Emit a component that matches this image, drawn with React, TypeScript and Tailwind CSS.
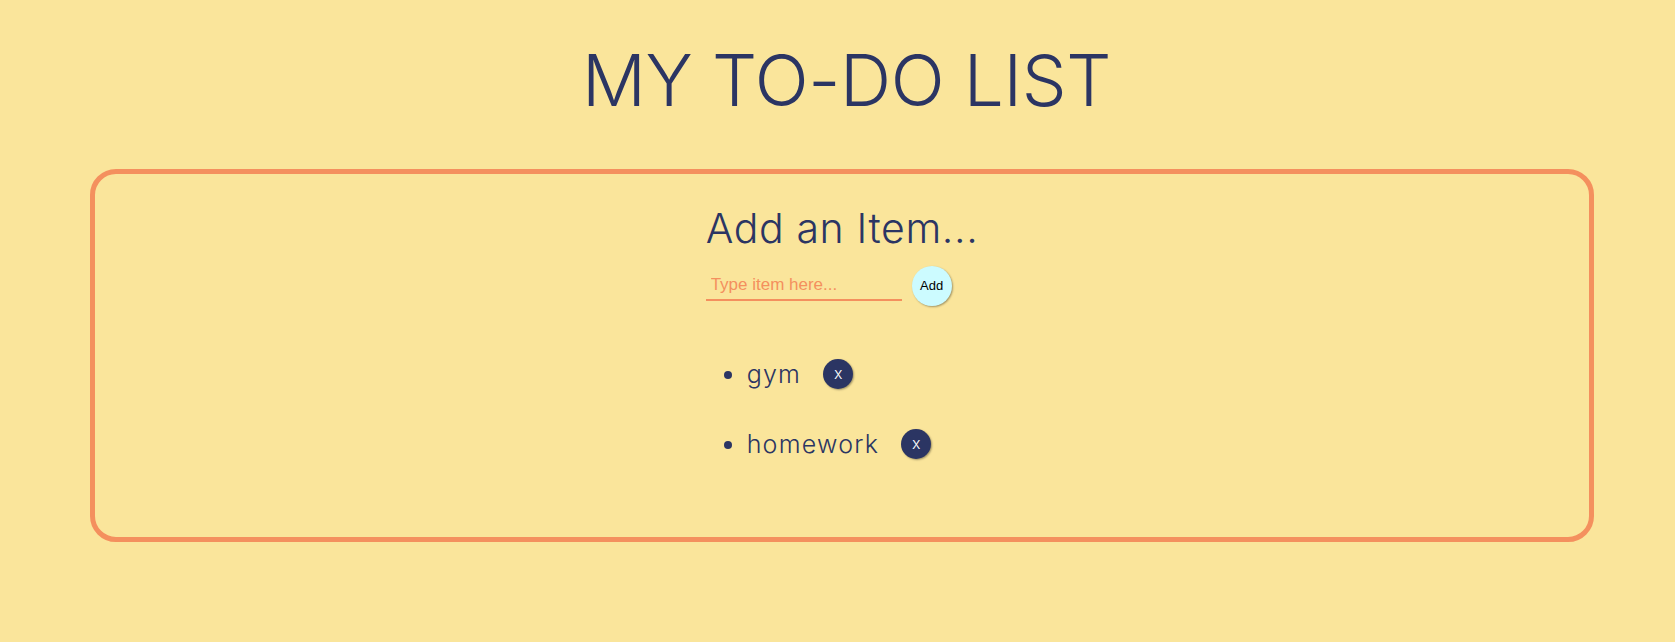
import { useState } from "react";

const font = { fontFamily: "Inter, 'Open Sans', sans-serif" };

export default function App() {
    const [items, setItems] = useState<string[]>(["gym", "homework"]);
    const [text, setText] = useState("");

    const addItem = () => {
        if (!text.trim()) return;
        setItems([...items, text.trim()]);
        setText("");
    };

    return (
        <div className="min-h-[642px] w-full bg-[#fae59b] text-[#2b3563] pt-[36px] pl-[90px] pr-[81px]" style={font}>
            <h1 className="text-center text-[71px] leading-[88px] font-light tracking-[-0.005em] mr-[-9px]">MY TO-DO LIST</h1>

            {/* Card */}
            <div className="mt-[45px] h-[373px] border-[5px] border-[#f4905e] rounded-[26px] flex justify-center pt-[28px]">
                <div className="flex flex-col items-start">
                    <h2 className="text-[41px] leading-[52px] font-light tracking-[0.015em]">Add an Item...</h2>

                    <div className="flex items-center gap-[10px] mt-[12px]">
                        <input
                            value={text}
                            onChange={(e) => setText(e.target.value)}
                            onKeyDown={(e) => e.key === "Enter" && addItem()}
                            placeholder="Type item here..."
                            className="w-[196px] h-[30px] bg-transparent outline-none border-b-2 border-[#f4905e] px-[5px] text-[17px] text-[#f4905e] placeholder:text-[#f4905e]"
                            style={{ fontFamily: "'Liberation Sans', Arial, sans-serif" }}
                        />
                        <button
                            onClick={addItem}
                            className="w-[40px] h-[40px] rounded-full bg-[#ccfbff] text-black text-[13px] shadow-[1px_1px_2px_rgba(0,0,0,0.35)]"
                            style={{ fontFamily: "'Liberation Sans', Arial, sans-serif" }}
                        >
                            Add
                        </button>
                    </div>

                    <ul className="list-disc pl-[41px] mt-[50px] flex flex-col gap-[34px]">
                        {items.map((item, i) => (
                            <li key={i} className="text-[25px] leading-[36px] font-light">
                                <span className="inline-flex items-center gap-[22px]">
                                    <span className="tracking-[0.05em]">{item}</span>
                                    <button
                                        onClick={() => setItems(items.filter((_, j) => j !== i))}
                                        className="w-[30px] h-[30px] rounded-full bg-[#2b3563] text-white text-[16px] leading-none shadow-[1px_1px_2px_rgba(0,0,0,0.35)] pb-[2px]"
                                    >
                                        x
                                    </button>
                                </span>
                            </li>
                        ))}
                    </ul>
                </div>
            </div>
        </div>
    );
}
